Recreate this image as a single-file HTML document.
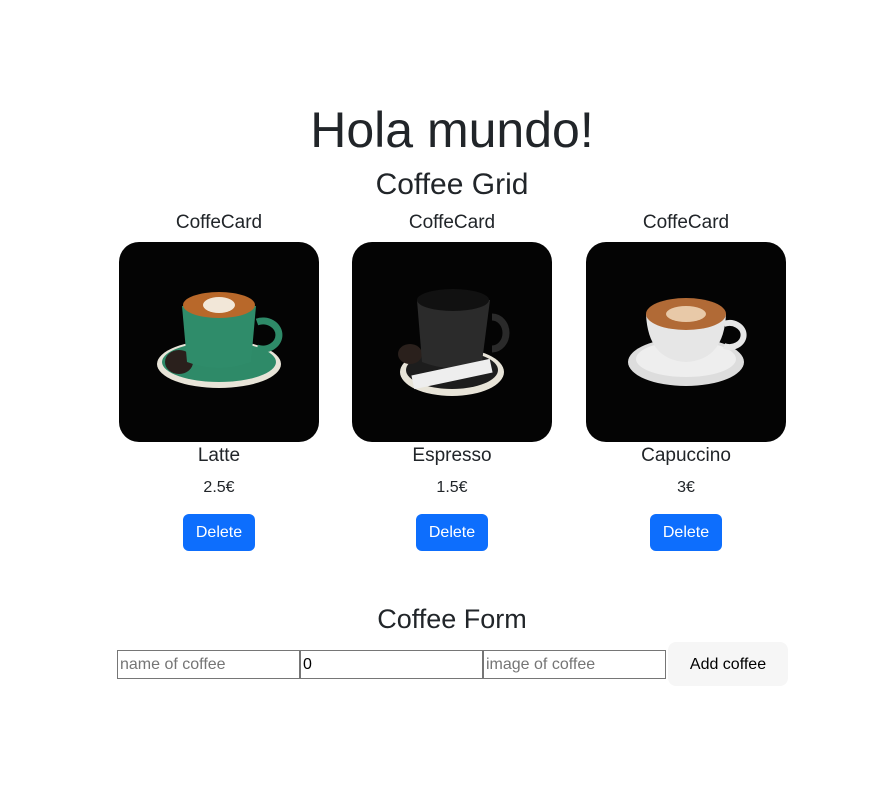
<!DOCTYPE html>
<html><head><style>
body{margin:0;width:894px;height:796px;background:#fff;font-family:"Liberation Sans",sans-serif;color:#212529;position:relative;overflow:hidden}
.a{position:absolute;text-align:center;white-space:nowrap}
.img{position:absolute;top:242px;width:200px;height:200px;border-radius:20px;background:#040404;overflow:hidden}
.btn{position:absolute;top:514px;width:72px;height:37px;background:#0d6efd;color:#fff;border-radius:6px;font-size:16px;line-height:38px;text-align:center}
input{position:absolute;top:650px;height:29px;box-sizing:border-box;border:1px solid #767676;font-family:"Liberation Sans",sans-serif;font-size:16px;padding:0 2px;margin:0}
input::placeholder{color:#757575}
</style></head><body>
<div class="a" style="left:0;width:904px;top:99px;font-size:50px;line-height:62px">Hola mundo!</div>
<div class="a" style="left:0;width:904px;top:167px;font-size:30px;line-height:36px">Coffee Grid</div>

<div class="a" style="left:119px;width:200px;top:211px;font-size:19px;line-height:24px">CoffeCard</div>
<div class="a" style="left:352px;width:200px;top:211px;font-size:19px;line-height:24px">CoffeCard</div>
<div class="a" style="left:586px;width:200px;top:211px;font-size:19px;line-height:24px">CoffeCard</div>

<div class="img" style="left:119px"><svg width="200" height="200">
<ellipse cx="100" cy="122" rx="62" ry="24" fill="#e8e4d8"/><ellipse cx="100" cy="120" rx="57" ry="20" fill="#2e8a68"/>
<ellipse cx="60" cy="120" rx="14" ry="12" fill="#2a201c"/>
<path d="M138 80 a16 14 0 1 1 0 26" stroke="#2e8a68" stroke-width="7" fill="none"/>
<path d="M63 64 L68 120 Q100 132 132 120 L137 64 Z" fill="#2f8c6a"/>
<ellipse cx="100" cy="63" rx="36" ry="13" fill="#b8682a"/><ellipse cx="100" cy="63" rx="16" ry="8" fill="#f2e7d8"/></svg></div>
<div class="img" style="left:352px"><svg width="200" height="200">
<ellipse cx="100" cy="130" rx="52" ry="24" fill="#e8e4d8"/><ellipse cx="100" cy="128" rx="46" ry="19" fill="#1d1d1d"/>
<ellipse cx="58" cy="112" rx="12" ry="10" fill="#2a201c"/>
<path d="M140 75 a14 16 0 1 1 0 32" stroke="#2a2a2a" stroke-width="7" fill="none"/>
<path d="M65 58 L70 120 Q100 132 130 120 L138 58 Z" fill="#2b2b2b"/>
<ellipse cx="101" cy="58" rx="36" ry="11" fill="#111"/>
<rect x="60" y="125" width="80" height="14" fill="#eee" transform="rotate(-12 100 132)"/></svg></div>
<div class="img" style="left:586px"><svg width="200" height="200">
<ellipse cx="100" cy="120" rx="58" ry="24" fill="#ddd"/><ellipse cx="100" cy="117" rx="50" ry="18" fill="#eee"/>
<path d="M138 82 a14 12 0 1 1 0 22" stroke="#e6e6e6" stroke-width="6" fill="none"/>
<path d="M60 72 Q62 118 100 120 Q138 118 140 72 Z" fill="#e6e6e6"/>
<ellipse cx="100" cy="72" rx="40" ry="16" fill="#b16a36"/><ellipse cx="100" cy="72" rx="20" ry="8" fill="#e8c9a8"/></svg></div>

<div class="a" style="left:119px;width:200px;top:444px;font-size:19px;line-height:24px">Latte</div>
<div class="a" style="left:352px;width:200px;top:444px;font-size:19px;line-height:24px">Espresso</div>
<div class="a" style="left:586px;width:200px;top:444px;font-size:19px;line-height:24px">Capuccino</div>
<div class="a" style="left:119px;width:200px;top:478px;font-size:16px;line-height:20px">2.5€</div>
<div class="a" style="left:352px;width:200px;top:478px;font-size:16px;line-height:20px">1.5€</div>
<div class="a" style="left:586px;width:200px;top:478px;font-size:16px;line-height:20px">3€</div>
<div class="btn" style="left:183px">Delete</div>
<div class="btn" style="left:416px">Delete</div>
<div class="btn" style="left:650px">Delete</div>

<div class="a" style="left:0;width:904px;top:602px;font-size:27px;line-height:34px">Coffee Form</div>
<input style="left:117px;width:183px" placeholder="name of coffee">
<input style="left:300px;width:183px" value="0">
<input style="left:483px;width:183px" placeholder="image of coffee">
<div class="a" style="left:668px;top:642px;width:120px;height:44px;line-height:45px;background:#f6f6f6;border-radius:8px;font-size:16px;color:#000">Add coffee</div>
</body></html>
